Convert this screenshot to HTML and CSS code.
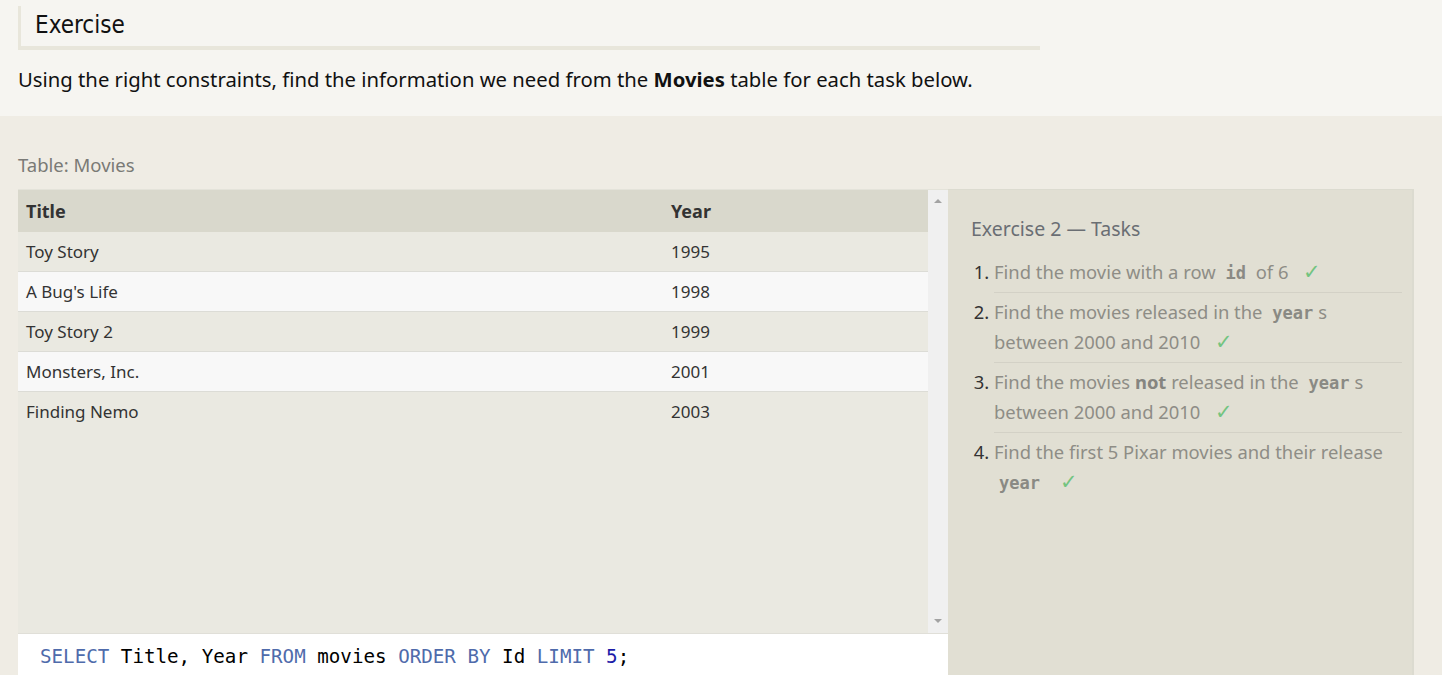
FILE: index.html
```html
<!DOCTYPE html>
<html>
<head>
<meta charset="utf-8">
<link rel="stylesheet" href="styles.css">
</head>
<body>
<section class="intro">
  <div class="heading">Exercise</div>
  <p class="desc">Using the right constraints, find the information we need from the <strong>Movies</strong> table for each task below.</p>
</section>
<section class="workspace">
  <div class="table-label">Table: Movies</div>
  <div class="panels">
    <div class="left">
      <div class="scroll">
        <div class="table-wrap">
          <table class="movies">
            <thead>
              <tr><th class="c-title">Title</th><th>Year</th></tr>
            </thead>
            <tbody>
              <tr><td>Toy Story</td><td>1995</td></tr>
              <tr class="alt"><td>A Bug's Life</td><td>1998</td></tr>
              <tr><td>Toy Story 2</td><td>1999</td></tr>
              <tr class="alt"><td>Monsters, Inc.</td><td>2001</td></tr>
              <tr class="last"><td>Finding Nemo</td><td>2003</td></tr>
            </tbody>
          </table>
        </div>
        <div class="scrollbar">
          <span class="arrow up"></span>
          <span class="arrow down"></span>
        </div>
      </div>
      <div class="editor"><span class="kw">SELECT</span> Title, Year <span class="kw">FROM</span> movies <span class="kw">ORDER BY</span> Id <span class="kw">LIMIT</span> <span class="num">5</span>;</div>
    </div>
    <aside class="tasks">
      <h3 class="tasks-title">Exercise 2 — Tasks</h3>
      <ol class="task-list">
        <li><span>Find the movie with a row <code>id</code> of 6 <span class="check">✓</span></span></li>
        <li><span>Find the movies released in the <code>year</code>s between 2000 and 2010 <span class="check">✓</span></span></li>
        <li><span>Find the movies <b>not</b> released in the <code>year</code>s between 2000 and 2010 <span class="check">✓</span></span></li>
        <li class="no-border"><span>Find the first 5 Pixar movies and their release <code>year</code> <span class="check">✓</span></span></li>
      </ol>
    </aside>
  </div>
</section>
</body>
</html>
```

FILE: styles.css
```css
html, body {
  margin: 0;
  padding: 0;
  height: 675px;
  overflow: hidden;
}
body {
  font-family: "Noto Sans", "Open Sans", sans-serif;
  background: #efece4;
  color: #222;
}
.intro {
  background: #f6f5f1;
  padding: 6px 18px 0 18px;
  height: 110px;
}
.heading {
  width: 1005px;
  border-left: 3px solid #e8e6db;
  border-bottom: 4px solid #e8e6db;
  padding: 4px 0 0 14px;
  height: 36px;
  font-family: "DejaVu Sans Condensed", "DejaVu Sans", sans-serif;
  font-size: 24px;
  line-height: 31px;
  color: #111;
}
.desc {
  margin: 14px 0 0 0;
  font-size: 20.3px;
  line-height: 30px;
  color: #111;
}
.desc strong { font-weight: 700; }

.workspace {
  padding: 36px 0 0 18px;
}
.table-label {
  font-size: 18.5px;
  line-height: 26px;
  color: #7a7a76;
  height: 26px;
  margin-bottom: 11px;
}
.panels {
  display: flex;
  align-items: stretch;
}
.left {
  width: 930px;
  display: flex;
  flex-direction: column;
}
.scroll {
  display: flex;
  height: 443px;
  border-top: 1px solid #e4e3da;
  background: #eae9e1;
}
.table-wrap {
  flex: 1;
}
.movies {
  width: 100%;
  border-collapse: collapse;
  font-size: 17px;
}
.movies th {
  background: #d9d8cc;
  text-align: left;
  font-weight: 700;
  color: #333;
  height: 42px;
  padding: 0 8px;
  font-size: 18px;
}
.movies th.c-title { width: 629px; }
.movies td {
  height: 39px;
  padding: 0 8px;
  border-bottom: 1px solid #dcdcd6;
  color: #333;
  background: #eae9e1;
}
.movies tr.alt td { background: #f8f8f8; }
.movies tr.last td { border-bottom: none; }
.scrollbar {
  width: 20px;
  background: #f0f0f0;
  position: relative;
}
.arrow {
  position: absolute;
  left: 6px;
  width: 0;
  height: 0;
  border-left: 4px solid transparent;
  border-right: 4px solid transparent;
}
.arrow.up {
  top: 9px;
  border-bottom: 4px solid #a3a3a3;
}
.arrow.down {
  bottom: 10px;
  border-top: 4px solid #a3a3a3;
}
.editor {
  background: #ffffff;
  height: 42px;
  border-top: 1px solid #e0dfd8;
  padding: 10px 0 0 22px;
  box-sizing: border-box;
  font-family: "DejaVu Sans Mono", "Liberation Mono", monospace;
  font-size: 19.2px;
  line-height: 26px;
  color: #000;
  white-space: pre;
}
.editor .kw { color: #4f6bab; }
.editor .num { color: #1c1ca8; }

.tasks {
  width: 466px;
  margin-left: 0;
  background: #e1dfd3;
  border-top: 1px solid #dcdbd0;
  border-right: 2px solid #dcdbd0;
  box-sizing: border-box;
  height: 486px;
  padding: 26px 10px 0 23px;
}
.tasks-title {
  margin: 0 0 11px 0;
  font-weight: 400;
  font-size: 19.5px;
  line-height: 26px;
  color: #6a6e73;
}
.task-list {
  margin: 0;
  padding: 0 0 0 23px;
  font-size: 18.4px;
  line-height: 30px;
  color: #8e8d86;
}
.task-list li {
  padding: 4px 0 5px 0;
  border-bottom: 1px solid #d3d1c6;
}
.task-list li::marker { color: #333; }
.task-list li.no-border { border-bottom: none; }
.task-list code {
  font-family: "DejaVu Sans Mono", "Liberation Mono", monospace;
  font-weight: 700;
  font-size: 17px;
  line-height: 1;
  color: #8a8a84;
  padding: 0 5px;
}
.task-list b { font-weight: 700; color: #858580; }
.check {
  color: #73c480;
  font-size: 21px;
  line-height: 1;
  margin-left: 10px;
}
```
